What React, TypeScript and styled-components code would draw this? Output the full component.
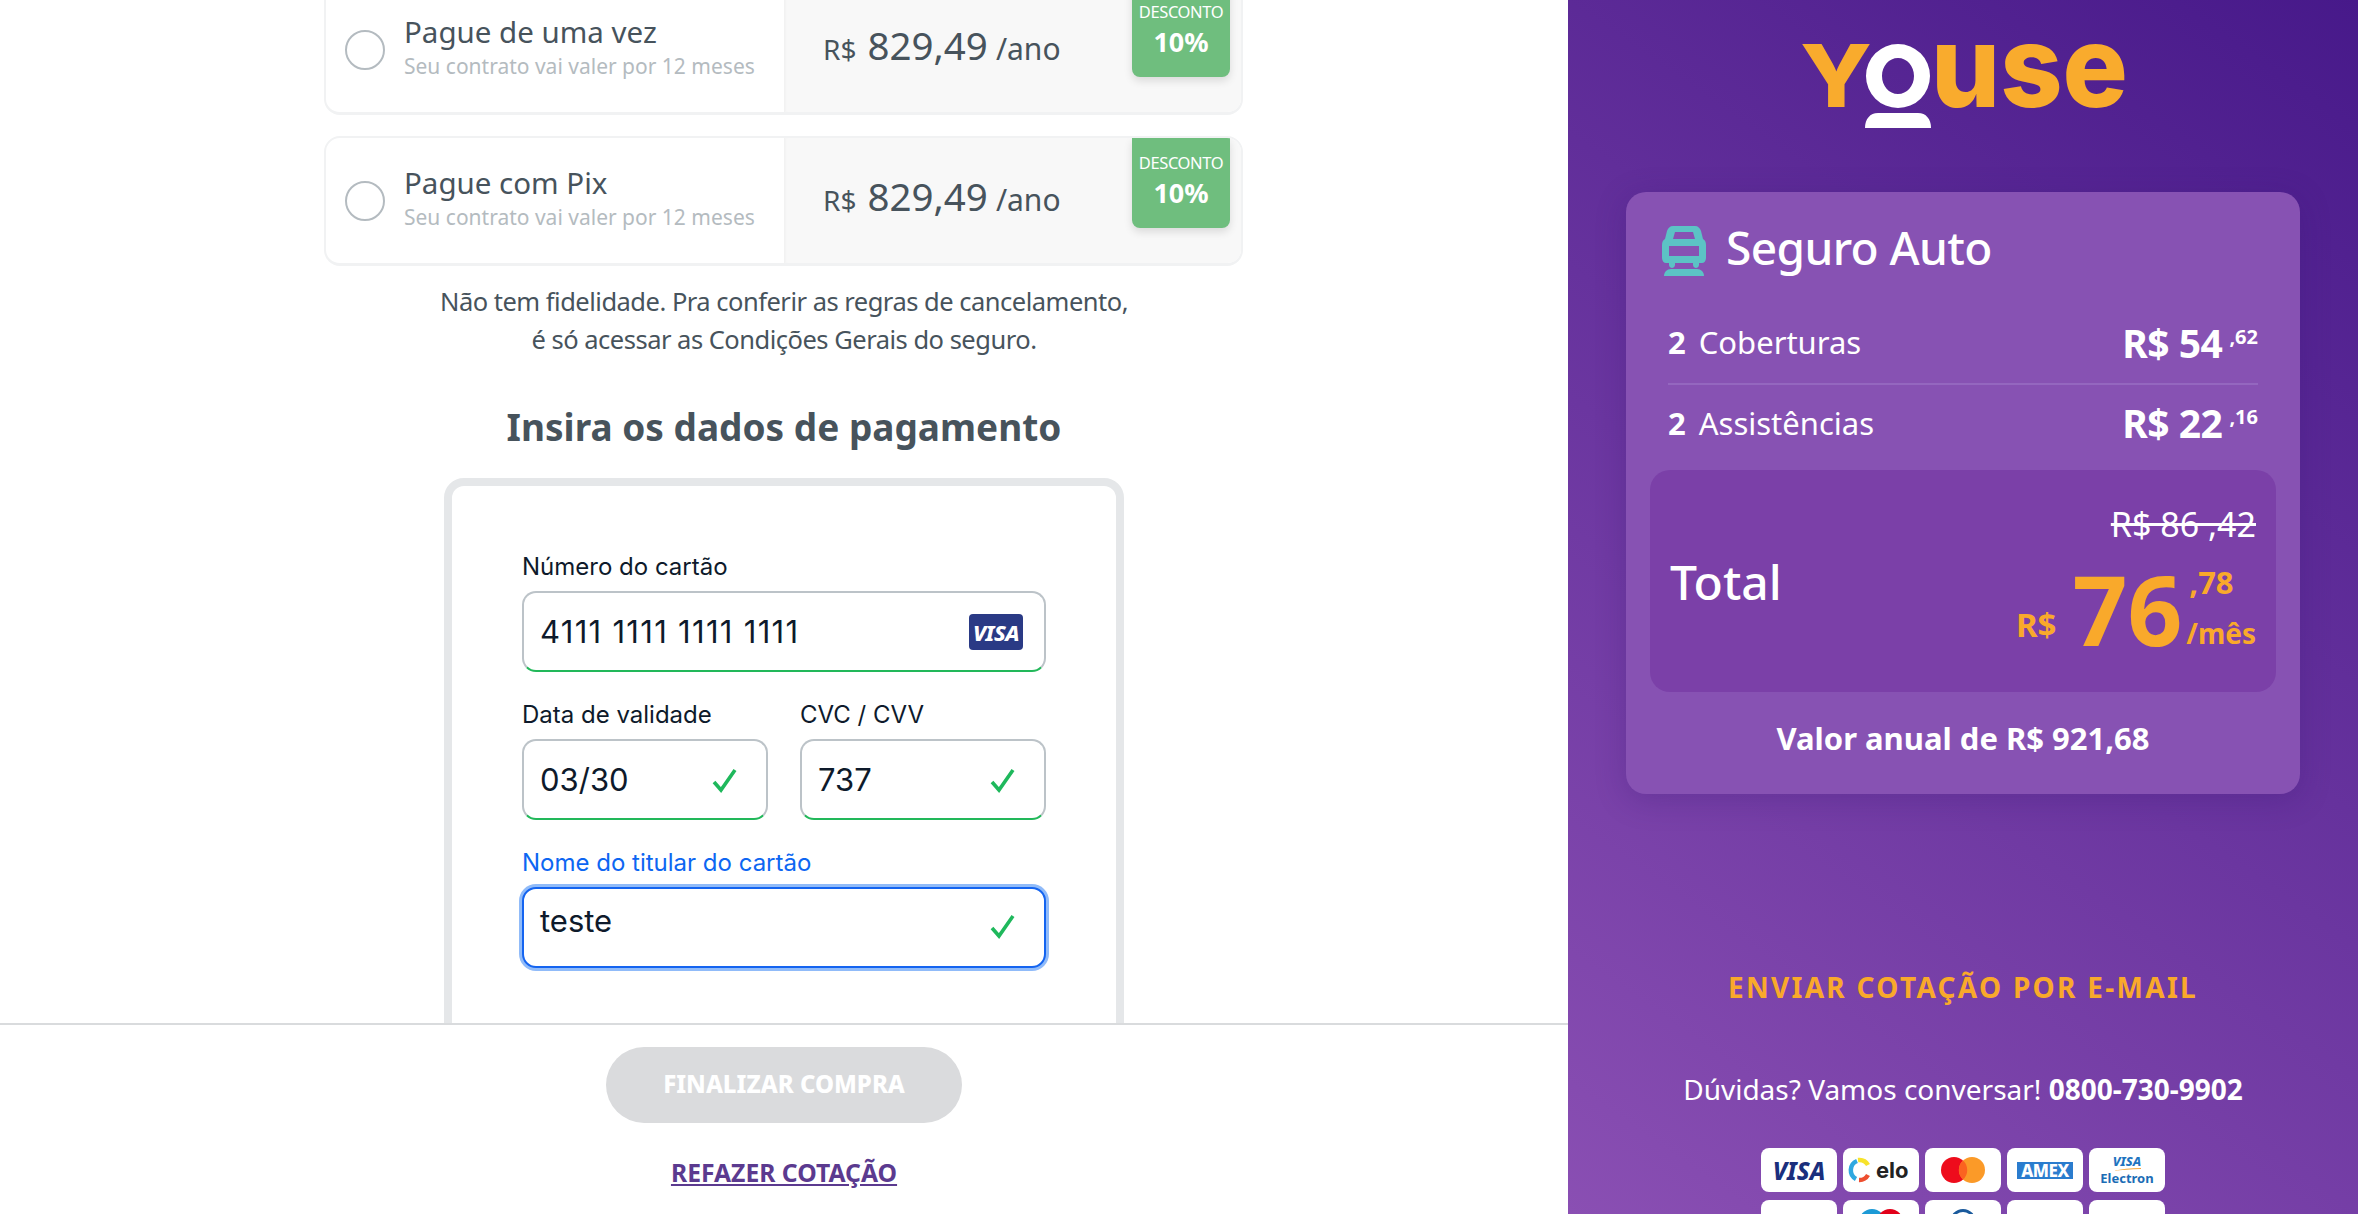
import React from "react";
import styled, { createGlobalStyle } from "styled-components";

const FONT = `"Noto Sans", "Open Sans", sans-serif`;
const FORM_FONT = `Inter, "Noto Sans", sans-serif`;

const Global = createGlobalStyle`
  html, body {
    margin: 0;
    padding: 0;
    height: 100%;
    overflow: hidden;
    background: #fff;
  }
  * { box-sizing: border-box; }
  body { font-family: ${FONT}; }
`;

const Page = styled.div`
  display: flex;
  width: 2358px;
  height: 1214px;
  overflow: hidden;
`;

const LeftColumn = styled.main`
  display: flex;
  flex-direction: column;
  width: 1568px;
  height: 100%;
`;

const Scroller = styled.div`
  height: 1023px;
  flex: none;
  overflow: hidden;
  display: flex;
  flex-direction: column;
  align-items: center;
`;

const PlanList = styled.div`
  display: flex;
  flex-direction: column;
  gap: 21px;
  margin-top: -15px;
  width: 919px;
  margin-left: -1px;
  flex: none;
`;

const PlanCard = styled.label`
  display: flex;
  height: 130px;
  border-radius: 16px;
  border: 2px solid #f1f2f3;
  border-bottom-width: 3px;
  overflow: hidden;
  background: #fff;
`;

const PlanInfo = styled.div`
  display: flex;
  align-items: center;
  width: 458px;
  padding-left: 19px;
  gap: 19px;
`;

const Radio = styled.span`
  width: 40px;
  height: 40px;
  border-radius: 50%;
  border: 2px solid #b4bbc0;
  flex: none;
`;

const PlanText = styled.div`
  display: flex;
  flex-direction: column;
  padding-bottom: 5px;
`;

const PlanTitle = styled.span`
  font-size: 29.5px;
  line-height: 38px;
  color: #47535c;
`;

const PlanHint = styled.span`
  font-size: 21px;
  line-height: 30px;
  color: #b4bbc0;
`;

const PlanPrice = styled.div`
  flex: 1;
  display: flex;
  background: #f8f8f8;
  justify-content: space-between;
  align-items: flex-start;
  padding: 0 11px 0 39px;
  box-shadow: inset 3px 0 3px -2px #eee;
`;

const PriceText = styled.div`
  display: flex;
  align-items: baseline;
  gap: 8px;
  height: 100%;
  padding-top: 32px;
  color: #47535c;
  font-size: 30px;
`;

const Currency = styled.span`
  font-size: 28px;
  margin-right: 3px;
`;

const Amount = styled.span`
  font-size: 38.5px;
`;

const DiscountBadge = styled.div`
  width: 98px;
  height: 90px;
  background: #6fbe7e;
  border-radius: 0 0 8px 8px;
  box-shadow: 0 4px 8px rgba(0, 0, 0, 0.12);
  color: #fff;
  display: flex;
  flex-direction: column;
  align-items: center;
  justify-content: center;
  gap: 4px;
  padding-bottom: 7px;
`;

const DiscountLabel = styled.span`
  font-size: 16.5px;
  line-height: 22px;
  letter-spacing: -0.4px;
`;

const DiscountValue = styled.span`
  font-size: 27px;
  line-height: 30px;
  font-weight: 700;
`;

const Note = styled.p`
  margin: 16px 0 0;
  font-size: 25.5px;
  letter-spacing: -0.5px;
  line-height: 38px;
  color: #47535c;
  text-align: center;
  flex: none;
`;

const SectionTitle = styled.h2`
  margin: 42px 0 0;
  font-size: 37px;
  line-height: 54px;
  font-weight: 700;
  color: #47535c;
  flex: none;
`;

const FormCard = styled.form`
  margin-top: 24px;
  width: 680px;
  flex: none;
  height: 700px;
  border: 8px solid #e5e7e9;
  border-radius: 20px;
  padding: 63px 70px 0;
  display: flex;
  flex-direction: column;
  gap: 25px;
`;

const Row = styled.div`
  display: flex;
  gap: 32px;
`;

const Field = styled.div`
  flex: 1 1 0;
  display: flex;
  flex-direction: column;
  gap: 6px;
`;

const WideField = styled(Field)`
  flex: none;
`;

const FieldLabel = styled.span<{ $active?: boolean }>`
  font-family: ${FORM_FONT};
  font-size: 24px;
  line-height: 36px;
  color: ${(p) => (p.$active ? "#0d66f2" : "#0e1a2b")};
`;

const InputBox = styled.div<{ $focus?: boolean; $spaced?: boolean }>`
  height: 81px;
  display: flex;
  align-items: ${(p) => (p.$focus ? "flex-start" : "center")};
  justify-content: space-between;
  padding: ${(p) => (p.$focus ? "13px 21px 0 16px" : "0 21px 0 16px")};
  border-radius: 14px;
  background: #fff;
  font-family: ${FORM_FONT};
  font-size: 31px;
  letter-spacing: ${(p) => (p.$spaced ? "1.3px" : "0")};
  color: #0e1a2b;
  border: ${(p) => (p.$focus ? "2px solid #1464f0" : "2px solid #bcc3c8")};
  border-bottom: ${(p) => (p.$focus ? "2px solid #1464f0" : "2px solid #22b85a")};
  box-shadow: ${(p) => (p.$focus ? "0 0 0 3px #90bbf9" : "none")};
`;

const CheckHolder = styled.span<{ $focus?: boolean }>`
  display: flex;
  margin-right: 7px;
  margin-top: ${(p) => (p.$focus ? "11px" : "0")};
`;

const VisaBadge = styled.span`
  width: 54px;
  height: 36px;
  border-radius: 4px;
  background: #2a3a85;
  color: #fff;
  font-family: ${FONT};
  font-size: 22px;
  font-weight: 800;
  font-style: italic;
  letter-spacing: -0.5px;
  display: flex;
  align-items: center;
  justify-content: center;
`;

const Footer = styled.footer`
  flex: 1;
  border-top: 2px solid #d9dbdd;
  display: flex;
  flex-direction: column;
  align-items: center;
  padding-top: 22px;
`;

const SubmitButton = styled.button`
  width: 356px;
  height: 76px;
  border: none;
  border-radius: 38px;
  background: #dadbdd;
  color: #fff;
  font-family: ${FONT};
  font-size: 24px;
  font-weight: 800;
  padding: 0 0 4px;
`;

const RestartLink = styled.a`
  margin-top: 33px;
  font-size: 24.7px;
  font-weight: 700;
  color: #5b3a8f;
  text-decoration: underline;
`;

const Aside = styled.aside`
  width: 790px;
  height: 100%;
  overflow: hidden;
  background: linear-gradient(215deg, #47198a 0%, #8a4fb3 100%);
  display: flex;
  flex-direction: column;
  align-items: center;
  padding-top: 44px;
  color: #fff;
`;

const LogoSvg = styled.svg`
  display: block;
  flex: none;
  width: 323px;
  height: 84px;
  margin-left: -1px;
  overflow: visible;
`;

const SummaryCard = styled.section`
  margin-top: 64px;
  flex: none;
  width: 674px;
  height: 602px;
  background: #8752b3;
  border-radius: 20px;
  box-shadow: 0 6px 30px rgba(50, 20, 110, 0.25);
  padding: 34px 24px 0;
  display: flex;
  flex-direction: column;
`;

const SummaryHead = styled.div`
  display: flex;
  align-items: center;
  gap: 20px;
  padding-left: 12px;
  height: 50px;
  margin-bottom: 25px;
`;

const SummaryTitle = styled.h3`
  margin: 0 0 8px;
  font-size: 46px;
  font-weight: 500;
  letter-spacing: -0.6px;
`;

const LineItem = styled.div<{ $divided?: boolean }>`
  display: flex;
  align-items: center;
  justify-content: space-between;
  margin: 0 18px;
  height: ${(p) => (p.$divided ? "84px" : "75px")};
  border-bottom: ${(p) => (p.$divided ? "2px solid #9467bf" : "none")};
`;

const LineLabel = styled.span`
  font-size: 31px;
  b {
    margin-right: 13px;
  }
`;

const LineValue = styled.span`
  font-size: 39px;
  font-weight: 700;
  letter-spacing: -0.5px;
  sup {
    font-size: 20px;
    margin-left: 7px;
    line-height: 0;
    letter-spacing: 0;
  }
`;

const TotalBox = styled.div`
  margin-top: 10px;
  height: 222px;
  flex: none;
  background: #7b40a8;
  border-radius: 20px;
  display: flex;
  align-items: center;
  justify-content: space-between;
  padding: 0 20px;
`;

const TotalLabel = styled.span`
  font-size: 48px;
  font-weight: 500;
`;

const TotalValues = styled.div`
  display: flex;
  flex-direction: column;
  align-items: flex-end;
`;

const OldPrice = styled.s`
  font-size: 34px;
  line-height: 46px;
`;

const NewPrice = styled.div`
  display: flex;
  align-items: flex-end;
  color: #f9a92b;
  font-weight: 700;
  margin-top: 10px;
`;

const NewCurrency = styled.span`
  font-size: 33px;
  margin-right: 16px;
  margin-bottom: 14px;
`;

const NewAmount = styled.span`
  font-size: 96px;
  line-height: 104px;
`;

const NewCents = styled.div`
  display: flex;
  flex-direction: column;
  margin-left: 4px;
  margin-bottom: 6px;
`;

const CentsValue = styled.span`
  font-size: 31px;
  line-height: 44px;
  margin-bottom: 7px;
  padding-left: 3px;
`;

const PerMonth = styled.span`
  font-size: 28px;
  line-height: 44px;
`;

const AnnualValue = styled.p`
  margin: 25px 0 0;
  text-align: center;
  font-size: 31px;
  font-weight: 700;
`;

const EmailLink = styled.a`
  margin-top: 174px;
  flex: none;
  color: #f9a92b;
  font-size: 28px;
  line-height: 38px;
  font-weight: 700;
  letter-spacing: 2.3px;
`;

const HelpText = styled.p`
  margin: 64px 0 0;
  flex: none;
  font-size: 28px;
  line-height: 38px;
`;

const Brands = styled.div`
  margin-top: 40px;
  flex: none;
  display: grid;
  grid-template-columns: repeat(5, 76px);
  grid-auto-rows: 44px;
  gap: 8px 6px;
`;

const BrandTile = styled.div`
  background: #fff;
  border-radius: 8px;
  display: flex;
  align-items: center;
  justify-content: center;
  overflow: hidden;
`;

const BrandText = styled.span<{ $color: string; $size?: number }>`
  color: ${(p) => p.$color};
  font-size: ${(p) => p.$size || 22}px;
  font-weight: 800;
  font-style: italic;
`;

const ElectronText = styled.span`
  display: flex;
  flex-direction: column;
  align-items: center;
  color: #1b6cb5;
  line-height: 1;
`;

const ElectronVisa = styled.span`
  font-size: 13px;
  font-weight: 800;
  font-style: italic;
  color: #1f74c0;
  line-height: 14px;
`;

const ElectronName = styled.span`
  font-size: 13px;
  font-weight: 700;
  line-height: 15px;
`;

const AmexText = styled.span`
  color: #fff;
  background: #2a7cce;
  font-size: 17px;
  font-weight: 800;
  line-height: 17px;
  padding: 0 4px;
  letter-spacing: -0.5px;
`;

const Check = () => (
  <svg width="26" height="26" viewBox="0 0 26 26" fill="none">
    <path d="M2 15l7 8L23 3" stroke="#1fb85c" strokeWidth="3.6" />
  </svg>
);

const Plan = ({ title }: { title: string }) => (
  <PlanCard>
    <PlanInfo>
      <Radio />
      <PlanText>
        <PlanTitle>{title}</PlanTitle>
        <PlanHint>Seu contrato vai valer por 12 meses</PlanHint>
      </PlanText>
    </PlanInfo>
    <PlanPrice>
      <PriceText>
        <Currency>R$</Currency>
        <Amount>829,49</Amount>
        <span>/ano</span>
      </PriceText>
      <DiscountBadge>
        <DiscountLabel>DESCONTO</DiscountLabel>
        <DiscountValue>10%</DiscountValue>
      </DiscountBadge>
    </PlanPrice>
  </PlanCard>
);

// logo: the letters stay text, the "o" and the body under it are the person mark
const Logo = () => (
  <LogoSvg viewBox="0 0 323 84">
    <text x="-1" y="63" fill="#f9ab2d" fontFamily="Inter" fontWeight="800" fontSize="86" textLength="72" lengthAdjust="spacingAndGlyphs">
      Y
    </text>
    <path
      d="M65 32a32 32 0 0 1 64 0a32 32 0 0 1-64 0zM81 32c0 10 7 18 16 18s16-8 16-18s-7-18-16-18s-16 8-16 18z"
      fill="#fff"
      fillRule="evenodd"
    />
    <path d="M64 84c0-9 5-15 13-15h40c8 0 13 6 13 15z" fill="#fff" />
    <text x="130" y="63" fill="#f9ab2d" fontFamily="Inter" fontWeight="800" fontSize="114" textLength="197" lengthAdjust="spacingAndGlyphs">
      use
    </text>
  </LogoSvg>
);

const CarIcon = () => (
  <svg width="44" height="50" viewBox="0 0 44 50" fill="#5cc3c5">
    <path d="M11 0h22c3 0 5 2 6 5l2 8c2 1 3 3 3 6v13c0 3-2 5-4 5h-3v2c0 2-2 3-3 3s-3-1-3-3v-2H13v2c0 2-2 3-3 3s-3-1-3-3v-2H4c-2 0-4-2-4-5V19c0-3 1-5 3-6l2-8c1-3 3-5 6-5zm2 6l-2 7h22l-2-7zM7 20v10h30V20z" fillRule="evenodd" />
    <path d="M2 50c0-4 3-7 7-7h26c4 0 7 3 7 7z" />
  </svg>
);

const brandsTop = (
  <>
    <BrandTile>
      <BrandText $color="#1a2f7d" $size={24}>VISA</BrandText>
    </BrandTile>
    <BrandTile>
      <svg width="66" height="28" viewBox="0 0 66 28">
        <path d="M9 5a10 10 0 0 0-1 18" fill="none" stroke="#2fa8e0" strokeWidth="4.5" />
        <path d="M10 4a10 10 0 0 1 10 5" fill="none" stroke="#f7e32c" strokeWidth="4.5" />
        <path d="M20 19a10 10 0 0 1-9 5" fill="none" stroke="#ee4f30" strokeWidth="4.5" />
        <text x="28" y="22" fontFamily="Inter" fontWeight="700" fontSize="22" fill="#222">elo</text>
      </svg>
    </BrandTile>
    <BrandTile>
      <svg width="44" height="26" viewBox="0 0 44 26">
        <circle cx="13" cy="13" r="13" fill="#ee0c1c" />
        <circle cx="31" cy="13" r="13" fill="#fb9a28" />
        <path d="M22 3.4a13 13 0 0 1 0 19.2a13 13 0 0 1 0-19.2z" fill="#fb6320" />
      </svg>
    </BrandTile>
    <BrandTile>
      <AmexText>AMEX</AmexText>
    </BrandTile>
    <BrandTile>
      <ElectronText>
        <ElectronVisa>VISA</ElectronVisa>
        <svg width="28" height="3" viewBox="0 0 28 3">
          <path d="M0 3c8-2 18-3 28-3v1C18 1 8 2 0 3z" fill="#f5a63a" />
        </svg>
        <ElectronName>Electron</ElectronName>
      </ElectronText>
    </BrandTile>
  </>
);

const brandsBottom = (
  <>
    <BrandTile />
    <BrandTile>
      <svg width="44" height="26" viewBox="0 0 44 26">
        <circle cx="13" cy="13" r="13" fill="#1c9ad6" />
        <circle cx="31" cy="13" r="13" fill="#e2001a" />
      </svg>
    </BrandTile>
    <BrandTile>
      <svg width="26" height="26" viewBox="0 0 26 26">
        <circle cx="13" cy="13" r="11.5" fill="none" stroke="#1a5a9c" strokeWidth="3" />
      </svg>
    </BrandTile>
    <BrandTile />
    <BrandTile />
  </>
);

export default function App() {
  return (
    <>
      <Global />
      <Page>
        <LeftColumn>
          <Scroller>
            <PlanList>
              <Plan title="Pague de uma vez" />
              <Plan title="Pague com Pix" />
            </PlanList>
            <Note>
              Não tem fidelidade. Pra conferir as regras de cancelamento,
              <br />é só acessar as Condições Gerais do seguro.
            </Note>
            <SectionTitle>Insira os dados de pagamento</SectionTitle>
            <FormCard>
              <WideField>
                <FieldLabel>Número do cartão</FieldLabel>
                <InputBox $spaced>
                  4111 1111 1111 1111
                  <VisaBadge>VISA</VisaBadge>
                </InputBox>
              </WideField>
              <Row>
                <Field>
                  <FieldLabel>Data de validade</FieldLabel>
                  <InputBox>
                    03/30
                    <CheckHolder>
                      <Check />
                    </CheckHolder>
                  </InputBox>
                </Field>
                <Field>
                  <FieldLabel>CVC / CVV</FieldLabel>
                  <InputBox>
                    737
                    <CheckHolder>
                      <Check />
                    </CheckHolder>
                  </InputBox>
                </Field>
              </Row>
              <WideField>
                <FieldLabel $active>Nome do titular do cartão</FieldLabel>
                <InputBox $focus>
                  teste
                  <CheckHolder $focus>
                    <Check />
                  </CheckHolder>
                </InputBox>
              </WideField>
            </FormCard>
          </Scroller>
          <Footer>
            <SubmitButton type="button">FINALIZAR COMPRA</SubmitButton>
            <RestartLink href="#">REFAZER COTAÇÃO</RestartLink>
          </Footer>
        </LeftColumn>
        <Aside>
          <Logo />
          <SummaryCard>
            <SummaryHead>
              <CarIcon />
              <SummaryTitle>Seguro Auto</SummaryTitle>
            </SummaryHead>
            <LineItem $divided>
              <LineLabel>
                <b>2</b>Coberturas
              </LineLabel>
              <LineValue>
                R$ 54<sup>,62</sup>
              </LineValue>
            </LineItem>
            <LineItem>
              <LineLabel>
                <b>2</b>Assistências
              </LineLabel>
              <LineValue>
                R$ 22<sup>,16</sup>
              </LineValue>
            </LineItem>
            <TotalBox>
              <TotalLabel>Total</TotalLabel>
              <TotalValues>
                <OldPrice>R$ 86 ,42</OldPrice>
                <NewPrice>
                  <NewCurrency>R$</NewCurrency>
                  <NewAmount>76</NewAmount>
                  <NewCents>
                    <CentsValue>,78</CentsValue>
                    <PerMonth>/mês</PerMonth>
                  </NewCents>
                </NewPrice>
              </TotalValues>
            </TotalBox>
            <AnnualValue>Valor anual de R$ 921,68</AnnualValue>
          </SummaryCard>
          <EmailLink>ENVIAR COTAÇÃO POR E-MAIL</EmailLink>
          <HelpText>
            Dúvidas? Vamos conversar! <b>0800-730-9902</b>
          </HelpText>
          <Brands>
            {brandsTop}
            {brandsBottom}
          </Brands>
        </Aside>
      </Page>
    </>
  );
}
